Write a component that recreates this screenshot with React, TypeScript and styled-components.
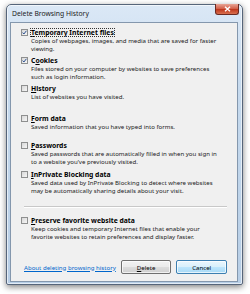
import React from "react";
import styled, { createGlobalStyle } from "styled-components";

const Global = createGlobalStyle`
  html, body { margin: 0; padding: 0; background: #ffffff; }
  body { font-family: "Noto Sans", "DejaVu Sans", sans-serif; }
`;

const Page = styled.div`
  width: 250px;
  height: 294px;
  padding: 4px 0 0 6px;
  box-sizing: border-box;
`;

const Window = styled.div`
  width: 237px;
  height: 281px;
  box-sizing: border-box;
  border: 1px solid #56657a;
  border-radius: 5px 5px 2px 2px;
  background: linear-gradient(180deg, #dbe8f6 0%, #c6daee 30%, #b7cee6 100%);
  box-shadow: 0 2px 6px rgba(0, 0, 0, 0.5), inset 0 0 0 1px rgba(255, 255, 255, 0.6);
  display: flex;
  flex-direction: column;
  padding: 0 4px 3px 3px;
`;

const TitleBar = styled.div`
  height: 17px;
  display: flex;
  align-items: flex-start;
  justify-content: space-between;
`;

const Title = styled.span`
  font-size: 6.8px;
  line-height: 17px;
  color: #1a1a1a;
  padding-left: 2px;
  white-space: nowrap;
`;

const CloseButton = styled.div`
  width: 24px;
  height: 11px;
  box-sizing: border-box;
  margin-top: -1px;
  margin-right: -1px;
  border: 1px solid #6b2a22;
  border-top: none;
  border-radius: 0 0 3px 3px;
  background: linear-gradient(180deg, #e8a596 0%, #d4624b 45%, #c0391f 55%, #d9704f 100%);
  display: flex;
  align-items: center;
  justify-content: center;
`;

const Content = styled.div`
  flex: 1;
  border: 1px solid #8497ad;
  background: #f0f0f0;
  padding: 5px 10px 7px 10px;
  display: flex;
  flex-direction: column;
`;

const Item = styled.div<{ $top: number }>`
  margin-top: ${(p) => p.$top}px;
  display: grid;
  grid-template-columns: 9px 1fr;
`;

const Box = styled.div<{ $checked?: boolean }>`
  width: 7px;
  height: 7px;
  margin-top: 1px;
  box-sizing: border-box;
  border: 1px solid #8e8f8f;
  background: linear-gradient(135deg, #d8d8d8 0%, #f6f6f6 100%);
  display: flex;
  align-items: center;
  justify-content: center;
`;

const Header = styled.span<{ $focus?: boolean }>`
  font-weight: 700;
  font-size: 6.8px;
  line-height: 9px;
  color: #000;
  justify-self: start;
  white-space: nowrap;
  outline: ${(p) => (p.$focus ? "1px dotted #333" : "none")};
  outline-offset: -1px;
  padding: 0 1px;
`;

const Key = styled.span`
  text-decoration: underline;
`;

const Desc = styled.div`
  grid-column: 2;
  font-size: 6.1px;
  line-height: 8px;
  color: #1a1a1a;
  padding-left: 1px;
  white-space: nowrap;
`;

const Separator = styled.div`
  margin: 11px 0 8px 3px;
  height: 0;
  border-top: 1px solid #c8c8c8;
  border-bottom: 1px solid #ffffff;
`;

const Footer = styled.div`
  margin-top: 19px;
  display: flex;
  align-items: center;
  gap: 5px;
`;

const Link = styled.a`
  font-size: 6.1px;
  color: #0066cc;
  text-decoration: underline;
  white-space: nowrap;
  margin-left: 3px;
  margin-right: auto;
`;

const Button = styled.div<{ $default?: boolean }>`
  width: 51px;
  height: 14px;
  box-sizing: border-box;
  border: 1px solid ${(p) => (p.$default ? "#3c7fb1" : "#707070")};
  border-radius: 2px;
  background: ${(p) =>
    p.$default
      ? "linear-gradient(180deg, #eaf6fd 0%, #d9f0fc 49%, #bee6fd 51%, #a7d9f5 100%)"
      : "linear-gradient(180deg, #f2f2f2 0%, #ebebeb 49%, #dddddd 51%, #cfcfcf 100%)"};
  box-shadow: inset 0 0 0 1px rgba(255, 255, 255, 0.7);
  font-size: 6.1px;
  color: #000;
  display: flex;
  align-items: center;
  justify-content: center;
`;

const Check = () => (
  <svg width="5" height="5" viewBox="0 0 5 5">
    <path d="M0.6 2.6 L1.9 4 L4.4 0.8" fill="none" stroke="#2a4f8f" strokeWidth="1" />
  </svg>
);

type ItemData = {
  top: number;
  checked: boolean;
  pre: string;
  key: string;
  post: string;
  desc: string[];
  focus?: boolean;
};

const items: ItemData[] = [
  {
    top: 0,
    checked: true,
    pre: "",
    key: "T",
    post: "emporary Internet files",
    desc: ["Copies of webpages, images, and media that are saved for faster", "viewing."],
    focus: true,
  },
  {
    top: 3,
    checked: true,
    pre: "C",
    key: "o",
    post: "okies",
    desc: ["Files stored on your computer by websites to save preferences", "such as login information."],
  },
  {
    top: 3,
    checked: false,
    pre: "",
    key: "H",
    post: "istory",
    desc: ["List of websites you have visited."],
  },
  {
    top: 13,
    checked: false,
    pre: "",
    key: "F",
    post: "orm data",
    desc: ["Saved information that you have typed into forms."],
  },
  {
    top: 10,
    checked: false,
    pre: "",
    key: "P",
    post: "asswords",
    desc: ["Saved passwords that are automatically filled in when you sign in", "to a website you\u2019ve previously visited."],
  },
  {
    top: 4,
    checked: false,
    pre: "",
    key: "I",
    post: "nPrivate Blocking data",
    desc: ["Saved data used by InPrivate Blocking to detect where websites", "may be automatically sharing details about your visit."],
  },
];

const preserve: ItemData = {
  top: 0,
  checked: false,
  pre: "",
  key: "P",
  post: "reserve favorite website data",
  desc: ["Keep cookies and temporary Internet files that enable your", "favorite websites to retain preferences and display faster."],
};

const Row = ({ it }: { it: ItemData }) => (
  <Item $top={it.top}>
    <Box $checked={it.checked}>{it.checked && <Check />}</Box>
    <Header $focus={it.focus}>
      {it.pre}
      <Key>{it.key}</Key>
      {it.post}
    </Header>
    <Desc>
      {it.desc.map((d, i) => (
        <div key={i}>{d}</div>
      ))}
    </Desc>
  </Item>
);

export default function App() {
  return (
    <>
      <Global />
      <Page>
        <Window>
          <TitleBar>
            <Title>Delete Browsing History</Title>
            <CloseButton>
              <svg width="7" height="6" viewBox="0 0 7 6">
                <path d="M1 0.8 L6 5.2 M6 0.8 L1 5.2" stroke="#ffffff" strokeWidth="1.4" />
              </svg>
            </CloseButton>
          </TitleBar>
          <Content>
            {items.map((it, i) => (
              <Row key={i} it={it} />
            ))}
            <Separator />
            <Row it={preserve} />
            <Footer>
              <Link href="#">About deleting browsing history</Link>
              <Button>
                <Key>D</Key>elete
              </Button>
              <Button $default>Cancel</Button>
            </Footer>
          </Content>
        </Window>
      </Page>
    </>
  );
}
